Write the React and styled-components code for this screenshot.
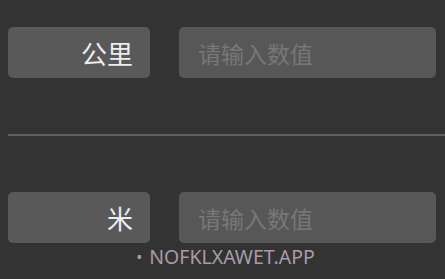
import styled, { createGlobalStyle } from "styled-components";

const GlobalStyle = createGlobalStyle`
  html, body {
    margin: 0;
    padding: 0;
    background: #333333;
  }
  body {
    font-family: "Noto Sans", "Noto Sans CJK SC", sans-serif;
  }
`;

const App = () => {
  return (
    <Page>
      <GlobalStyle />
      <Row>
        <UnitLabel>公里</UnitLabel>
        <ValueInput placeholder="请输入数值" />
      </Row>

      <Divider />

      <Row $bottom>
        <UnitLabel>米</UnitLabel>
        <ValueInput placeholder="请输入数值" />
      </Row>

      <Watermark>
        <Dot>•</Dot>NOFKLXAWET.APP
      </Watermark>
    </Page>
  );
};

const Page = styled.div`
  width: 445px;
  height: 279px;
  padding-top: 27px;
  box-sizing: border-box;
  display: flex;
  flex-direction: column;
  overflow: hidden;
`;

const Row = styled.div`
  display: flex;
  align-items: stretch;
  gap: 29px;
  height: 51px;
  padding: 0 9px 0 8px;
  margin-top: ${(p) => (p.$bottom ? "56px" : "0")};
`;

const UnitLabel = styled.div`
  width: 142px;
  box-sizing: border-box;
  display: flex;
  align-items: center;
  justify-content: flex-end;
  padding-right: 17px;
  background: #595959;
  border-radius: 5px;
  color: #ededed;
  font-family: "Noto Sans CJK SC", sans-serif;
  font-size: 26px;
`;

const ValueInput = styled.input`
  flex: 1;
  min-width: 0;
  box-sizing: border-box;
  border: none;
  outline: none;
  background: #575757;
  border-radius: 5px;
  padding: 0 0 0 19px;
  color: #ededed;
  font-family: "Noto Sans CJK SC", sans-serif;
  font-size: 23px;

  &::placeholder {
    color: #777777;
  }
`;

const Divider = styled.div`
  height: 2px;
  margin: 56px 0 0 8px;
  background: #5f5f5f;
`;

const Watermark = styled.div`
  display: flex;
  align-items: center;
  justify-content: center;
  gap: 7px;
  margin-top: 2px;
  padding-left: 6px;
  color: #a99ba9;
  font-family: "Noto Sans", sans-serif;
  font-size: 19.5px;
  line-height: 24px;
`;

const Dot = styled.span`
  font-size: 16px;
`;

export default App;
